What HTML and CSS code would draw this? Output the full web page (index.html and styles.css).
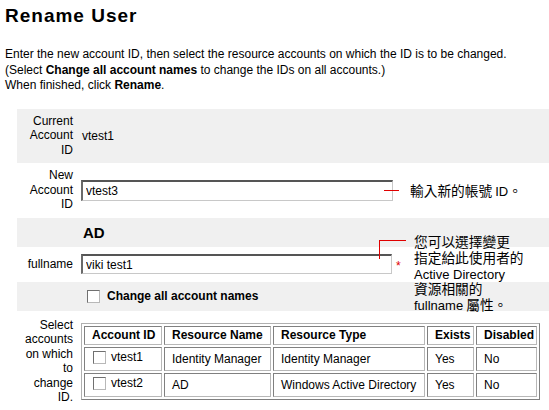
FILE: index.html
```html
<!DOCTYPE html>
<html>
<head>
<meta charset="utf-8">
<link rel="stylesheet" href="styles.css">
</head>
<body>
<h1 class="title">Rename User</h1>
<p class="intro">Enter the new account ID, then select the resource accounts on which the ID is to be changed.<br>(Select <b>Change all account names</b> to change the IDs on all accounts.)<br>When finished, click <b>Rename</b>.</p>

<div class="form">
  <div class="row band r1">
    <div class="label">Current<br>Account<br>ID</div>
    <div class="field">vtest1</div>
  </div>
  <div class="row r2">
    <div class="label">New<br>Account<br>ID</div>
    <div class="field"><input class="text" type="text" value="vtest3"></div>
  </div>
  <div class="row band r3">
    <div class="label"></div>
    <div class="field section">AD</div>
  </div>
  <div class="row r4">
    <div class="label">fullname</div>
    <div class="field"><input class="text" type="text" value="viki test1"><span class="req">*</span></div>
  </div>
  <div class="row band r5">
    <div class="label"></div>
    <div class="field"><span class="check main"><span class="box"></span><b>Change all account names</b></span></div>
  </div>
  <div class="row r6">
    <div class="label">Select<br>accounts<br>on which<br>to<br>change<br>ID.</div>
    <div class="field">
      <table class="accounts">
        <colgroup>
          <col class="c1"><col class="c2"><col class="c3"><col class="c4"><col class="c5">
        </colgroup>
        <tr><th>Account ID</th><th>Resource Name</th><th>Resource Type</th><th>Exists</th><th>Disabled</th></tr>
        <tr><td><span class="check"><span class="box"></span>vtest1</span></td><td>Identity Manager</td><td>Identity Manager</td><td>Yes</td><td>No</td></tr>
        <tr><td><span class="check"><span class="box"></span>vtest2</span></td><td>AD</td><td>Windows Active Directory</td><td>Yes</td><td>No</td></tr>
      </table>
    </div>
  </div>
</div>

<div class="callout c-one">
  <span class="line h1"></span>
  <div class="note">輸入新的帳號 <span class="lat">ID</span>。</div>
</div>
<div class="callout c-two">
  <span class="line v2"></span>
  <span class="line h2"></span>
  <div class="note">
    <div class="nl">您可以選擇變更</div>
    <div class="nl">指定給此使用者的</div>
    <div class="nl"><span class="lat">Active Directory</span></div>
    <div class="nl">資源相關的</div>
    <div class="nl"><span class="lat">fullname</span> 屬性。</div>
  </div>
</div>
</body>
</html>
```
FILE: styles.css
```css
html, body {
  margin: 0;
  padding: 0;
  background: #ffffff;
}
body {
  font-family: "Liberation Sans", Arial, sans-serif;
  font-size: 12px;
  color: #000;
  position: relative;
  width: 549px;
  height: 410px;
  overflow: hidden;
}
.title {
  margin: 0;
  padding: 4px 0 0 5px;
  font-size: 19px;
  letter-spacing: 1px;
  font-weight: bold;
  line-height: 24px;
}
.intro {
  margin: 19px 0 0 5px;
  line-height: 15.5px;
}
.form {
  margin: 15px 0 0 17px;
  width: 532px;
}
.row {
  display: flex;
  align-items: center;
}
.band {
  background: #f0f0f0;
}
.label {
  width: 56px;
  padding-right: 8px;
  text-align: right;
  line-height: 14.5px;
  flex: none;
}
.field {
  flex: 1;
  display: flex;
  align-items: center;
}
.r1 { height: 54px; }
.r2 { height: 55px; }
.r3 { height: 29px; }
.r4 { height: 35px; }
.r5 { height: 29px; }
.r6 { padding-top: 7px; align-items: center; }
.r1 .field { padding-left: 1px; }
.section {
  font-weight: bold;
  font-size: 15px;
  padding-left: 2px;
}
.text {
  box-sizing: border-box;
  width: 312px;
  height: 21px;
  margin: 0;
  padding: 0 3px;
  font-family: "Liberation Sans", Arial, sans-serif;
  font-size: 12px;
  color: #000;
  background: #fff;
  border-style: solid;
  border-width: 2px 1px 1px 2px;
  border-color: #555555 #c8c8c8 #c8c8c8 #6a6a6a;
  outline: none;
}
.r4 .text { width: 311px; height: 20px; }
.req {
  color: #e00000;
  font-size: 12px;
  margin-left: 4px;
  position: relative;
  top: 2px;
}
.check {
  display: inline-flex;
  align-items: center;
}
.box {
  display: inline-block;
  box-sizing: border-box;
  width: 13px;
  height: 13px;
  background: #fff;
  border: 1px solid;
  border-color: #707070 #b8b8b8 #b8b8b8 #707070;
  margin-right: 6px;
}
.check.main { padding-left: 6px; }
.check.main .box { margin-right: 7px; }
.accounts {
  border-collapse: separate;
  border-spacing: 2px;
  border: 1px solid;
  border-color: #b0b0b0 #808080 #808080 #b0b0b0;
  table-layout: fixed;
  width: 459px;
  font-size: 12px;
}
.accounts .c1 { width: 78px; }
.accounts .c2 { width: 107px; }
.accounts .c3 { width: 152px; }
.accounts .c4 { width: 47px; }
.accounts .c5 { width: 61px; }
.accounts th, .accounts td {
  border: 1px solid;
  border-color: #808080 #b8b8b8 #b8b8b8 #808080;
  padding: 0 0 0 7px;
  text-align: left;
  white-space: nowrap;
  overflow: hidden;
}
.accounts th {
  height: 17px;
  font-weight: bold;
}
.accounts td {
  height: 22px;
}
.accounts td .box { margin-right: 5px; }
.accounts td:first-child { padding-left: 8px; }

.callout {
  position: absolute;
  font-family: "Noto Sans CJK TC", "Noto Sans", sans-serif;
  font-size: 13.7px;
  color: #000;
}
.lat {
  font-family: "Liberation Sans", Arial, sans-serif;
  font-size: 13px;
}
.line {
  position: absolute;
  background: #e00000;
}
.c-one {
  left: 384px;
  top: 182px;
}
.c-one .h1 {
  left: 0;
  top: 8px;
  width: 15px;
  height: 1px;
}
.c-one .note {
  margin-left: 26px;
  line-height: 16px;
}
.c-two {
  left: 379px;
  top: 234px;
}
.c-two .v2 {
  left: 0;
  top: 6px;
  width: 1px;
  height: 19px;
}
.c-two .h2 {
  left: 0;
  top: 6px;
  width: 27px;
  height: 1px;
}
.c-two .note {
  margin-left: 35px;
}
.c-two .nl {
  height: 15.75px;
  line-height: 15.75px;
}
```
